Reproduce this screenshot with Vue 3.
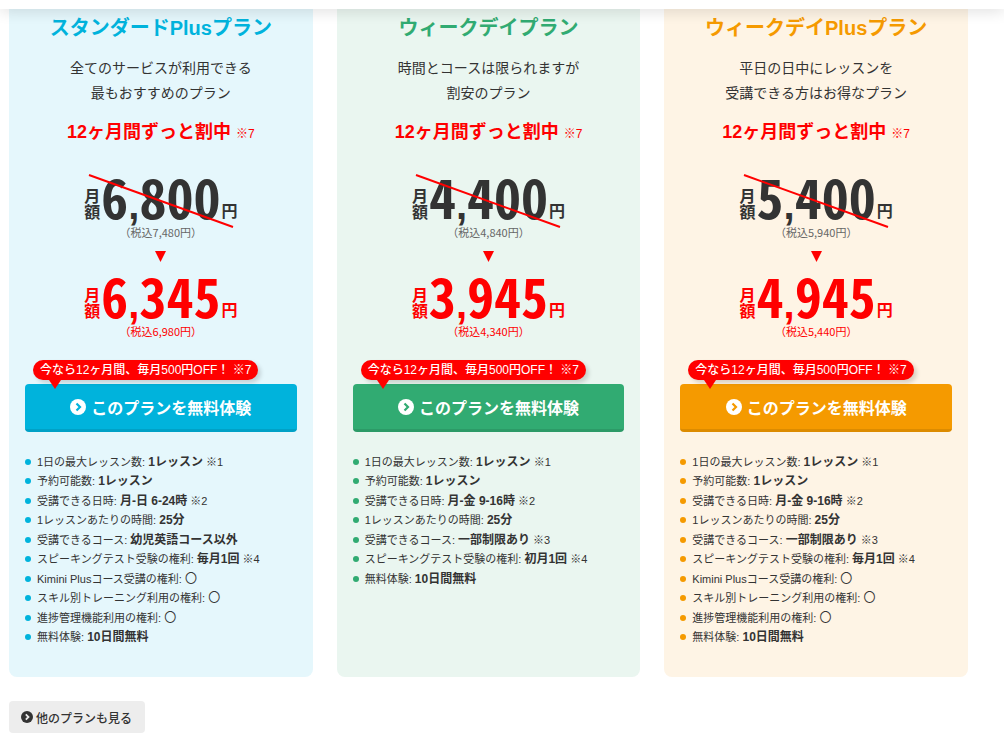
<script setup>
const plans = [
  {
    id: 'standard',
    name: 'スタンダードPlusプラン',
    lead: ['全てのサービスが利用できる', '最もおすすめのプラン'],
    before: ['6', '800'],
    beforeTax: '7,480',
    after: ['6', '345'],
    afterTax: '6,980',
    features: [
      { label: '1日の最大レッスン数', value: '1レッスン', note: '※1' },
      { label: '予約可能数', value: '1レッスン' },
      { label: '受講できる日時', value: '月-日 6-24時', note: '※2' },
      { label: '1レッスンあたりの時間', value: '25分' },
      { label: '受講できるコース', value: '幼児英語コース以外' },
      { label: 'スピーキングテスト受験の権利', value: '毎月1回', note: '※4' },
      { label: 'Kimini Plusコース受講の権利', mark: '〇' },
      { label: 'スキル別トレーニング利用の権利', mark: '〇' },
      { label: '進捗管理機能利用の権利', mark: '〇' },
      { label: '無料体験', value: '10日間無料' },
    ],
  },
  {
    id: 'weekday',
    name: 'ウィークデイプラン',
    lead: ['時間とコースは限られますが', '割安のプラン'],
    before: ['4', '400'],
    beforeTax: '4,840',
    after: ['3', '945'],
    afterTax: '4,340',
    features: [
      { label: '1日の最大レッスン数', value: '1レッスン', note: '※1' },
      { label: '予約可能数', value: '1レッスン' },
      { label: '受講できる日時', value: '月-金 9-16時', note: '※2' },
      { label: '1レッスンあたりの時間', value: '25分' },
      { label: '受講できるコース', value: '一部制限あり', note: '※3' },
      { label: 'スピーキングテスト受験の権利', value: '初月1回', note: '※4' },
      { label: '無料体験', value: '10日間無料' },
    ],
  },
  {
    id: 'weekday-plus',
    name: 'ウィークデイPlusプラン',
    lead: ['平日の日中にレッスンを', '受講できる方はお得なプラン'],
    before: ['5', '400'],
    beforeTax: '5,940',
    after: ['4', '945'],
    afterTax: '5,440',
    features: [
      { label: '1日の最大レッスン数', value: '1レッスン', note: '※1' },
      { label: '予約可能数', value: '1レッスン' },
      { label: '受講できる日時', value: '月-金 9-16時', note: '※2' },
      { label: '1レッスンあたりの時間', value: '25分' },
      { label: '受講できるコース', value: '一部制限あり', note: '※3' },
      { label: 'スピーキングテスト受験の権利', value: '毎月1回', note: '※4' },
      { label: 'Kimini Plusコース受講の権利', mark: '〇' },
      { label: 'スキル別トレーニング利用の権利', mark: '〇' },
      { label: '進捗管理機能利用の権利', mark: '〇' },
      { label: '無料体験', value: '10日間無料' },
    ],
  },
]
</script>

<template>
  <div class="page">
    <header class="topbar"></header>
    <main class="content">
      <section class="plans">
        <article v-for="plan in plans" :key="plan.id" class="card" :class="plan.id">
          <h2 class="name">{{ plan.name }}</h2>
          <p class="lead">{{ plan.lead[0] }}<br />{{ plan.lead[1] }}</p>
          <p class="promo">12ヶ月間ずっと割中 <small>※7</small></p>

          <div class="price">
            <div class="amount">
              <span class="per">月<br />額</span>
              <span class="digits">{{ plan.before[0] }}<span class="comma">,</span>{{ plan.before[1] }}</span>
              <span class="yen">円</span>
              <svg class="strike" viewBox="0 0 146 54" aria-hidden="true">
                <path d="M1 1 145 53" stroke="#f00" stroke-width="2" />
              </svg>
            </div>
            <p class="tax">（税込{{ plan.beforeTax }}円）</p>
          </div>
          <svg class="down" viewBox="0 0 11 11" aria-hidden="true">
            <path d="M0 0H11L5.500 11Z" fill="#f00" />
          </svg>
          <div class="price sale">
            <div class="amount">
              <span class="per">月<br />額</span>
              <span class="digits">{{ plan.after[0] }}<span class="comma">,</span>{{ plan.after[1] }}</span>
              <span class="yen">円</span>
            </div>
            <p class="tax">（税込{{ plan.afterTax }}円）</p>
          </div>

          <div class="cta">
            <span class="bubble">今なら12ヶ月間、毎月500円OFF！ ※7</span>
            <a class="trial" href="#">
              <svg class="icon" viewBox="0 0 16 16" aria-hidden="true">
                <circle cx="8" cy="8" r="8" fill="#fff" />
                <path class="chevron" d="M6.500 4.500 10 8 6.500 11.500" fill="none" stroke-width="2.200" />
              </svg>
              <span>このプランを無料体験</span>
            </a>
          </div>

          <ul class="features">
            <li v-for="item in plan.features" :key="item.label">
              <span>{{ item.label }}: <strong v-if="item.value">{{ item.value }}</strong><b v-if="item.mark" class="mark">{{ item.mark }}</b>{{ item.note ? ' ' + item.note : '' }}</span>
            </li>
          </ul>
        </article>
      </section>

      <a class="more" href="#">
        <svg class="more-icon" viewBox="0 0 12 12" aria-hidden="true">
          <circle cx="6" cy="6" r="6" fill="#333" />
          <path d="M4.800 3.300 7.500 6 4.800 8.700" fill="none" stroke="#ededed" stroke-width="1.800" />
        </svg>
        <span>他のプランも見る</span>
      </a>
    </main>
  </div>
</template>

<style>
body {
  margin: 0;
  background: #fff;
}
</style>

<style scoped>
.page {
  color: #333;
  font-family: 'Liberation Sans', 'Noto Sans CJK JP', sans-serif;
}
.topbar {
  position: sticky;
  top: 0;
  z-index: 5;
  height: 9px;
  background: #fff;
  box-shadow: 0 0 16px rgba(0, 0, 0, 0.2);
}
.content {
  padding: 0 36px 8px 9px;
}
.plans {
  display: grid;
  grid-template-columns: repeat(3, 1fr);
  gap: 24px;
}
.card {
  --main: #00b3dc;
  --edge: #00a1c6;
  --tint: #e5f7fc;
  display: flex;
  flex-direction: column;
  align-items: center;
  padding: 4px 16px 30px;
  border-radius: 0 0 8px 8px;
  background: var(--tint);
}
.weekday {
  --main: #31ab72;
  --edge: #2c9a67;
  --tint: #eaf6f0;
}
.weekday-plus {
  --main: #f59a00;
  --edge: #dc8b00;
  --tint: #fef4e5;
}
.name,
.lead,
.promo,
.tax {
  margin: 0;
  text-align: center;
}
.name {
  color: var(--main);
  font-size: 20px;
  line-height: 30px;
}
.lead {
  margin-top: 13px;
  font-size: 14px;
  line-height: 25px;
}
.promo {
  margin-top: 14px;
  color: #f00;
  font-size: 18px;
  font-weight: 700;
  line-height: 24px;
}
.promo small {
  font-size: 12px;
  font-weight: 400;
}
.price {
  margin-top: 28px;
}
.amount {
  position: relative;
  display: flex;
  align-items: flex-end;
  justify-content: center;
  gap: 1px;
  height: 48px;
}
.per,
.yen {
  font-size: 16px;
  font-weight: 700;
  line-height: 16px;
}
.per {
  padding-bottom: 1px;
}
.yen {
  padding-bottom: 2px;
}
.digits {
  padding-bottom: 2px;
  font-family: 'Noto Sans CJK JP', sans-serif;
  font-feature-settings: 'hwid';
  font-size: 54px;
  font-weight: 700;
  line-height: 48px;
}
.comma {
  font-family: 'Liberation Sans', sans-serif;
  font-feature-settings: normal;
  font-size: 40px;
  line-height: 0;
}
.strike {
  position: absolute;
  top: 0;
  left: calc(50% - 73px);
  width: 146px;
  height: 54px;
}
.tax {
  color: #666;
  font-family: 'Noto Sans CJK JP', sans-serif;
  font-size: 11px;
  line-height: 20px;
}
.down {
  width: 11px;
  height: 11px;
  margin-top: 9px;
}
.sale {
  margin-top: 11px;
  color: #f00;
}
.sale .tax {
  color: #f00;
}
.cta {
  position: relative;
  align-self: stretch;
  margin-top: 43px;
}
.bubble {
  position: absolute;
  left: 8px;
  bottom: 52px;
  padding: 0 7px;
  border-radius: 10px;
  background: #f00;
  box-shadow: 3px 3px 4px rgba(0, 0, 0, 0.15);
  color: #fff;
  font-size: 12px;
  font-weight: 500;
  line-height: 20px;
  white-space: nowrap;
}
.bubble::after {
  content: '';
  position: absolute;
  top: 20px;
  left: 16px;
  border: 6px solid transparent;
  border-top: 9px solid #f00;
  border-bottom: 0;
}
.trial {
  display: flex;
  align-items: center;
  justify-content: center;
  gap: 5px;
  height: 45px;
  border-bottom: 3px solid var(--edge);
  border-radius: 4px;
  background: var(--main);
  color: #fff;
  font-size: 16px;
  font-weight: 700;
  text-decoration: none;
}
.icon {
  width: 16px;
  height: 16px;
}
.chevron {
  stroke: var(--main);
}
.features {
  align-self: stretch;
  margin: 20px 0 0;
  padding: 0;
  list-style: none;
  font-size: 13px;
  line-height: 1.5;
}
.features li {
  display: flex;
  align-items: center;
  gap: 6px;
  height: 1.5em;
  white-space: nowrap;
}
.features li::before {
  content: '';
  width: 6px;
  height: 6px;
  border-radius: 50%;
  background: var(--main);
}
.features span {
  font-size: 11px;
}
.features strong {
  font-size: 12px;
}
.mark {
  font-size: 12px;
  font-weight: 400;
}
.more {
  display: inline-flex;
  align-items: center;
  gap: 3px;
  height: 32px;
  margin-top: 24px;
  padding: 0 13px 0 12px;
  border-radius: 4px;
  background: #ededed;
  color: #333;
  font-size: 12px;
  font-weight: 500;
  text-decoration: none;
}
.more-icon {
  width: 12px;
  height: 12px;
}
</style>
